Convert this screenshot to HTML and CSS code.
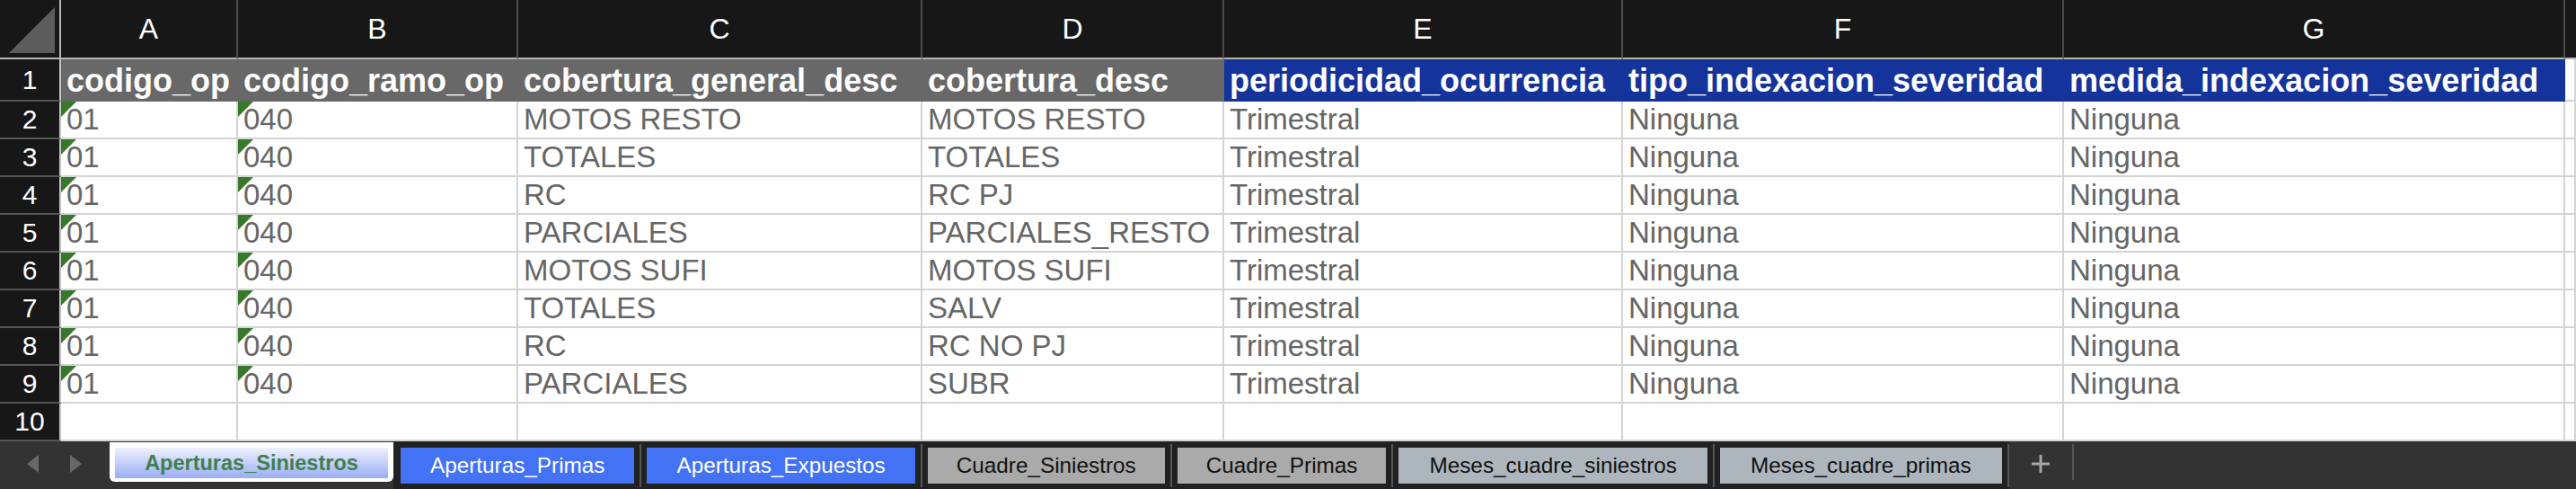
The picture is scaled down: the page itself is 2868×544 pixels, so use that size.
FILE: index.html
```html
<!DOCTYPE html>
<html lang="es">
<head>
<meta charset="utf-8">
<title>Aperturas_Siniestros</title>
<link rel="stylesheet" href="styles.css">
</head>
<body>
<div class="sheet">
  <div class="grid">
    <div class="corner"><span class="corner-tri"></span></div>
    <div class="colhdr">A</div>
    <div class="colhdr">B</div>
    <div class="colhdr">C</div>
    <div class="colhdr">D</div>
    <div class="colhdr">E</div>
    <div class="colhdr">F</div>
    <div class="colhdr">G</div>
    <div class="colhdr colhdr-last"></div>

    <div class="rowhdr">1</div>
    <div class="hcell gray">codigo_op</div>
    <div class="hcell gray">codigo_ramo_op</div>
    <div class="hcell gray">cobertura_general_desc</div>
    <div class="hcell gray">cobertura_desc</div>
    <div class="hcell blue">periodicidad_ocurrencia</div>
    <div class="hcell blue">tipo_indexacion_severidad</div>
    <div class="hcell blue">medida_indexacion_severidad</div>
    <div class="cell"></div>

    <div class="rowhdr">2</div>
    <div class="cell flag">01</div><div class="cell flag">040</div>
    <div class="cell">MOTOS RESTO</div><div class="cell">MOTOS RESTO</div>
    <div class="cell">Trimestral</div><div class="cell">Ninguna</div><div class="cell">Ninguna</div><div class="cell"></div>

    <div class="rowhdr">3</div>
    <div class="cell flag">01</div><div class="cell flag">040</div>
    <div class="cell">TOTALES</div><div class="cell">TOTALES</div>
    <div class="cell">Trimestral</div><div class="cell">Ninguna</div><div class="cell">Ninguna</div><div class="cell"></div>

    <div class="rowhdr">4</div>
    <div class="cell flag">01</div><div class="cell flag">040</div>
    <div class="cell">RC</div><div class="cell">RC PJ</div>
    <div class="cell">Trimestral</div><div class="cell">Ninguna</div><div class="cell">Ninguna</div><div class="cell"></div>

    <div class="rowhdr">5</div>
    <div class="cell flag">01</div><div class="cell flag">040</div>
    <div class="cell">PARCIALES</div><div class="cell">PARCIALES_RESTO</div>
    <div class="cell">Trimestral</div><div class="cell">Ninguna</div><div class="cell">Ninguna</div><div class="cell"></div>

    <div class="rowhdr">6</div>
    <div class="cell flag">01</div><div class="cell flag">040</div>
    <div class="cell">MOTOS SUFI</div><div class="cell">MOTOS SUFI</div>
    <div class="cell">Trimestral</div><div class="cell">Ninguna</div><div class="cell">Ninguna</div><div class="cell"></div>

    <div class="rowhdr">7</div>
    <div class="cell flag">01</div><div class="cell flag">040</div>
    <div class="cell">TOTALES</div><div class="cell">SALV</div>
    <div class="cell">Trimestral</div><div class="cell">Ninguna</div><div class="cell">Ninguna</div><div class="cell"></div>

    <div class="rowhdr">8</div>
    <div class="cell flag">01</div><div class="cell flag">040</div>
    <div class="cell">RC</div><div class="cell">RC NO PJ</div>
    <div class="cell">Trimestral</div><div class="cell">Ninguna</div><div class="cell">Ninguna</div><div class="cell"></div>

    <div class="rowhdr">9</div>
    <div class="cell flag">01</div><div class="cell flag">040</div>
    <div class="cell">PARCIALES</div><div class="cell">SUBR</div>
    <div class="cell">Trimestral</div><div class="cell">Ninguna</div><div class="cell">Ninguna</div><div class="cell"></div>

    <div class="rowhdr">10</div>
    <div class="cell"></div><div class="cell"></div><div class="cell"></div><div class="cell"></div>
    <div class="cell"></div><div class="cell"></div><div class="cell"></div><div class="cell"></div>
  </div>

  <div class="tabbar">
    <div class="nav">
      <svg class="arrow" width="14" height="20" viewBox="0 0 14 20"><polygon points="13,0 13,20 0,10" fill="#686868"/></svg>
      <svg class="arrow" width="14" height="20" viewBox="0 0 14 20"><polygon points="1,0 1,20 14,10" fill="#686868"/></svg>
    </div>
    <div class="tab-active"><div class="tab-active-inner">Aperturas_Siniestros</div></div>
    <div class="tabs-rest">
      <div class="tab tab-blue">Aperturas_Primas</div>
      <span class="sep"></span>
      <div class="tab tab-blue">Aperturas_Expuestos</div>
      <span class="sep"></span>
      <div class="tab tab-gray">Cuadre_Siniestros</div>
      <span class="sep"></span>
      <div class="tab tab-gray">Cuadre_Primas</div>
      <span class="sep"></span>
      <div class="tab tab-slate">Meses_cuadre_siniestros</div>
      <span class="sep"></span>
      <div class="tab tab-slate">Meses_cuadre_primas</div>
      <span class="sep sep-end"></span>
    </div>
    <div class="add">
      <svg width="20" height="22" viewBox="0 0 20 22"><path d="M10 1 V21 M0 11 H20" stroke="#a6a6a6" stroke-width="3"/></svg>
    </div>
    <span class="sep sep-add"></span>
  </div>
</div>
</body>
</html>
```

FILE: styles.css
```css
html, body {
  margin: 0;
  padding: 0;
  background: #ffffff;
}

body {
  width: 2868px;
  height: 544px;
  overflow: hidden;
  font-family: "Liberation Sans", Arial, sans-serif;
}

.sheet {
  display: flex;
  flex-direction: column;
  width: 2868px;
  height: 544px;
}

.grid {
  display: grid;
  grid-template-columns: 68px 197px 312px 450px 336px 444px 491px 558px 1fr;
  grid-template-rows: 66px 47px repeat(9, 42px);
  height: 491px;
}

.grid > div {
  box-sizing: border-box;
  min-width: 0;
  overflow: hidden;
  white-space: nowrap;
}

.corner {
  background: #171717;
  border-right: 2px solid #b4b4b4;
  border-bottom: 2px solid #b4b4b4;
  display: flex;
  align-items: flex-end;
  justify-content: flex-end;
  padding: 0 5px 5px 0;
}

.corner-tri {
  display: block;
  width: 0;
  height: 0;
  border-style: solid;
  border-width: 0 0 51px 51px;
  border-color: transparent transparent #5d5d5d transparent;
}

.colhdr {
  background: #171717;
  color: #ffffff;
  font-size: 32px;
  display: flex;
  align-items: center;
  justify-content: center;
  border-right: 2px solid #4c4c4c;
  border-bottom: 2px solid #b4b4b4;
}

.colhdr-last {
  border-right: none;
}

.rowhdr {
  background: #171717;
  color: #ffffff;
  font-size: 30px;
  display: flex;
  align-items: center;
  justify-content: center;
  border-right: 2px solid #c4c4c4;
  border-bottom: 2px solid #555555;
}

.hcell {
  color: #ffffff;
  font-weight: bold;
  font-size: 36px;
  display: flex;
  align-items: center;
  padding-left: 6px;
}

.hcell.gray {
  background: #676867;
}

.hcell.blue {
  background: #14339b;
}

.cell {
  position: relative;
  background: #ffffff;
  color: #666666;
  font-size: 33px;
  display: flex;
  align-items: center;
  padding-left: 6px;
  border-right: 2px solid #d4d4d4;
  border-bottom: 2px solid #d4d4d4;
}

.cell.flag::before {
  content: "";
  position: absolute;
  left: 0;
  top: 0;
  width: 0;
  height: 0;
  border-style: solid;
  border-width: 17px 17px 0 0;
  border-color: #37792a transparent transparent transparent;
}

/* tab bar */
.tabbar {
  display: flex;
  height: 53px;
  background: #333333;
}

.nav {
  width: 122px;
  display: flex;
  align-items: center;
  padding-left: 30px;
  gap: 33px;
  box-sizing: border-box;
  padding-bottom: 4px;
}

.arrow {
  display: block;
}

.tab-active {
  width: 316px;
  height: 44px;
  margin-top: 1px;
  box-sizing: border-box;
  background: #ffffff;
  padding: 6px 6px 4px 6px;
  border-radius: 0 0 6px 6px;
}

.tab-active-inner {
  height: 100%;
  background: linear-gradient(#eff1fd, #99adf5);
  color: #3f7f4f;
  font-weight: bold;
  font-size: 23.5px;
  display: flex;
  align-items: center;
  justify-content: center;
}

.tabs-rest {
  display: flex;
  align-items: stretch;
  background: #212121;
  padding: 7px 0 6px 8px;
}

.tab {
  display: flex;
  align-items: center;
  justify-content: center;
  font-size: 24.3px;
  padding: 0 32px;
  white-space: nowrap;
}

.tab-blue {
  background: #4372f4;
  color: #ffffff;
  padding: 0 33px;
}

.tab-gray {
  background: #a9aaa9;
  color: #111111;
}

.tab-slate {
  background: #adb5bd;
  color: #111111;
  padding: 0 34px;
}

.sep {
  display: block;
  width: 2px;
  background: #555555;
  margin: -4px 6px -4px 6px;
}

.sep-end {
  margin-right: 0;
}

.add {
  width: 70px;
  display: flex;
  align-items: center;
  justify-content: center;
  padding-bottom: 4px;
  box-sizing: border-box;
}

.sep-add {
  margin: 3px 0 10px 0;
}
```
